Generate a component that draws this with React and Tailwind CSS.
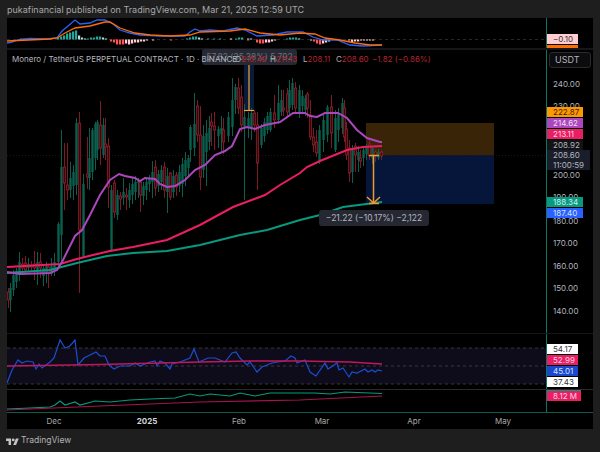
import React from 'react';

const toPoints = (pts) => pts.map((p) => p.join(',')).join(' ');

// candles as [x, high, bodyTop, bodyBottom, low, colour]
const candles = [
  [8, 288, 292, 300, 308, 'r'], [10, 283, 288, 300, 312, 'g'], [13, 270, 275, 290, 296, 'g'], [16, 268, 271, 282, 288, 'g'],
  [19, 252, 262, 275, 281, 'g'], [22, 258, 264, 268, 272, 'r'], [25, 256, 263, 270, 275, 'r'], [28, 258, 264, 268, 274, 'g'],
  [31, 261, 265, 267, 272, 'r'], [34, 251, 264, 268, 280, 'r'], [37, 252, 262, 272, 285, 'g'], [40, 253, 262, 268, 278, 'r'],
  [43, 265, 268, 276, 286, 'g'], [46, 262, 266, 274, 283, 'g'], [48, 266, 267, 272, 288, 'r'], [51, 258, 266, 274, 276, 'g'],
  [54, 253, 262, 270, 276, 'g'], [58, 222, 224, 262, 268, 'g'], [61, 130, 167, 235, 262, 'g'], [64, 143, 167, 183, 210, 'r'],
  [67, 143, 185, 190, 200, 'r'], [70, 162, 178, 190, 198, 'g'], [73, 165, 172, 186, 200, 'g'], [76, 118, 123, 185, 195, 'g'],
  [79, 112, 123, 230, 293, 'r'], [83, 174, 184, 257, 258, 'g'], [87, 137, 174, 177, 189, 'r'], [89, 128, 158, 178, 190, 'g'],
  [92, 128, 130, 172, 180, 'g'], [95, 122, 124, 158, 170, 'g'], [97, 120, 122, 150, 160, 'g'], [100, 101, 125, 148, 165, 'r'],
  [103, 118, 125, 155, 158, 'g'], [105, 118, 144, 147, 160, 'r'], [108, 138, 146, 187, 208, 'r'], [111, 185, 190, 250, 252, 'g'],
  [114, 180, 183, 212, 218, 'r'], [117, 190, 195, 215, 220, 'g'], [120, 192, 196, 199, 210, 'r'], [123, 178, 192, 198, 205, 'g'],
  [126, 188, 195, 197, 210, 'r'], [129, 183, 190, 200, 208, 'g'], [132, 178, 184, 195, 204, 'g'], [135, 176, 182, 192, 200, 'g'],
  [138, 178, 180, 183, 198, 'g'], [140, 180, 182, 195, 212, 'r'], [143, 182, 186, 196, 205, 'g'], [146, 178, 182, 190, 200, 'g'],
  [149, 175, 178, 184, 192, 'g'], [152, 161, 172, 182, 198, 'g'], [155, 160, 167, 188, 196, 'r'], [158, 170, 174, 186, 192, 'g'],
  [161, 165, 170, 182, 190, 'g'], [164, 162, 167, 190, 198, 'r'], [167, 168, 176, 192, 213, 'g'], [170, 172, 173, 197, 200, 'r'],
  [173, 170, 176, 192, 198, 'g'], [176, 172, 175, 187, 196, 'r'], [179, 165, 172, 186, 192, 'g'], [182, 158, 164, 184, 197, 'g'],
  [185, 152, 160, 176, 186, 'g'], [188, 155, 158, 168, 176, 'g'], [190, 125, 127, 150, 162, 'g'], [194, 93, 124, 148, 156, 'g'],
  [197, 100, 106, 135, 142, 'r'], [200, 106, 135, 177, 190, 'r'], [203, 125, 136, 170, 178, 'g'], [206, 120, 133, 152, 186, 'g'],
  [209, 116, 128, 142, 150, 'g'], [211, 113, 122, 126, 146, 'r'], [214, 112, 126, 130, 150, 'r'], [218, 126, 129, 136, 148, 'g'],
  [221, 116, 128, 134, 152, 'g'], [223, 118, 130, 142, 154, 'r'], [228, 112, 117, 136, 142, 'g'], [232, 78, 100, 127, 136, 'g'],
  [235, 84, 87, 100, 114, 'g'], [238, 78, 88, 108, 114, 'r'], [241, 85, 97, 125, 132, 'r'], [244, 104, 117, 127, 200, 'g'],
  [248, 112, 118, 128, 138, 'g'], [251, 108, 113, 128, 140, 'g'], [254, 110, 113, 125, 132, 'r'], [257, 112, 125, 163, 190, 'r'],
  [261, 124, 128, 145, 148, 'g'], [264, 118, 122, 136, 142, 'g'], [267, 112, 116, 130, 134, 'g'], [270, 108, 112, 130, 132, 'g'],
  [274, 95, 113, 120, 128, 'r'], [278, 85, 103, 120, 124, 'g'], [281, 90, 100, 112, 116, 'g'], [283, 90, 108, 110, 116, 'r'],
  [287, 88, 94, 112, 116, 'r'], [289, 80, 90, 108, 114, 'g'], [292, 78, 83, 105, 110, 'g'], [295, 82, 88, 108, 112, 'r'],
  [299, 85, 90, 112, 118, 'g'], [302, 90, 96, 106, 114, 'g'], [305, 95, 98, 110, 116, 'g'], [307, 92, 94, 108, 118, 'r'],
  [310, 100, 115, 137, 140, 'r'], [313, 128, 137, 145, 152, 'r'], [316, 130, 142, 153, 157, 'r'], [319, 125, 130, 162, 164, 'g'],
  [323, 115, 120, 140, 152, 'g'], [327, 105, 107, 135, 142, 'g'], [331, 95, 107, 133, 148, 'r'], [335, 110, 118, 150, 152, 'g'],
  [338, 108, 113, 130, 142, 'g'], [342, 98, 103, 128, 134, 'g'], [344, 100, 108, 137, 142, 'r'], [346, 122, 129, 155, 160, 'r'],
  [349, 140, 148, 173, 182, 'r'], [352, 145, 150, 172, 183, 'g'], [355, 143, 146, 155, 172, 'r'], [358, 146, 152, 160, 172, 'g'],
  [360, 150, 158, 161, 168, 'r'], [363, 148, 150, 158, 166, 'g'], [366, 144, 148, 154, 160, 'g'], [369, 140, 144, 156, 160, 'r'],
  [372, 146, 148, 158, 164, 'g'], [375, 150, 152, 156, 162, 'r'], [378, 149, 152, 158, 160, 'g'], [381, 150, 152, 156, 160, 'r'],
];

const purpleLine = [[7, 272], [20, 274], [50, 273], [57, 270], [62, 262], [75, 236], [82, 230], [90, 215], [100, 195], [110, 180], [119, 174], [125, 176], [135, 178], [140, 181], [145, 178], [155, 179], [160, 184], [167, 187], [175, 186], [185, 180], [195, 170], [205, 165], [215, 155], [225, 151], [232, 146], [240, 129], [247, 127], [255, 129], [265, 125], [280, 122], [293, 113], [305, 113], [310, 116], [317, 117], [325, 113], [338, 113], [347, 118], [357, 130], [367, 138], [380, 142], [382, 142]];
const crimsonLine = [[7, 267], [60, 264], [77, 259], [93, 255], [110, 251], [133, 247], [167, 240], [200, 225], [233, 207], [265, 195], [280, 185], [300, 173], [307, 167], [320, 161], [347, 150], [363, 147], [382, 146]];
const tealLine = [[7, 273], [50, 270], [77, 263], [107, 256], [133, 253], [167, 251], [200, 245], [240, 235], [267, 230], [300, 220], [320, 215], [343, 207], [382, 202]];

const macdBlue = [[7, 43], [12, 42], [18, 40], [30, 38.5], [45, 39], [57, 38], [62, 31], [68, 26], [75, 20], [80, 24], [90, 23], [97, 20], [105, 20], [113, 24], [120, 30], [130, 33], [140, 35], [160, 36], [185, 36], [190, 32], [195, 29], [200, 31], [210, 30], [223, 31], [237, 28], [245, 30], [257, 36], [273, 35], [287, 32], [303, 32], [313, 37], [323, 40], [337, 40], [350, 45], [363, 46], [382, 45]];
const macdOrange = [[7, 41], [50, 39], [57, 38], [65, 33], [75, 28], [90, 26], [105, 22], [110, 22], [120, 28], [135, 33], [150, 35], [170, 36], [190, 35], [200, 32], [230, 31], [245, 29], [260, 33], [280, 35], [300, 33], [315, 34], [325, 38], [340, 40], [355, 43], [370, 45], [382, 45]];

// histogram as [x, height above (+) or below (-) the zero line, colour]
const macdBars = [
  [20, 1, '#26a69a'], [23, 1, '#26a69a'], [26, 1, '#26a69a'], [29, 1, '#b2dfdb'], [32, 1, '#b2dfdb'],
  [57, 2, '#26a69a'], [60, 3, '#26a69a'], [63, 4, '#26a69a'], [66, 6, '#26a69a'], [69, 7, '#26a69a'], [72, 8, '#26a69a'], [75, 9, '#26a69a'], [78, 4, '#b2dfdb'], [81, 2, '#b2dfdb'], [84, 1, '#b2dfdb'],
  [87, 1, '#26a69a'], [90, 2, '#26a69a'], [93, 2, '#26a69a'], [96, 3, '#26a69a'], [99, 3, '#26a69a'], [102, 2, '#b2dfdb'], [105, 1, '#b2dfdb'],
  [110, -2, '#ff5252'], [113, -3, '#ff5252'], [116, -5, '#ff5252'], [119, -5, '#ff5252'], [122, -5, '#ff5252'], [125, -4, '#ffcdd2'], [128, -5, '#ffcdd2'], [131, -4, '#ffcdd2'], [134, -3, '#ffcdd2'], [137, -3, '#ffcdd2'], [140, -2, '#ffcdd2'], [143, -2, '#ffcdd2'], [146, -1, '#ffcdd2'], [152, -1, '#ffcdd2'], [170, -1, '#ff5252'],
  [186, 1, '#26a69a'], [189, 2, '#26a69a'], [192, 3, '#26a69a'], [195, 3, '#26a69a'], [198, 2, '#b2dfdb'], [201, 1, '#b2dfdb'], [207, 1, '#26a69a'], [213, 1, '#26a69a'], [219, 1, '#26a69a'], [230, 1, '#ffcdd2'],
  [235, 1, '#26a69a'], [238, 2, '#26a69a'], [241, 2, '#26a69a'], [247, 1, '#b2dfdb'], [250, 1, '#b2dfdb'],
  [247, -1, '#ff5252'], [256, -3, '#ff5252'], [259, -4, '#ff5252'], [262, -4, '#ff5252'], [265, -3, '#ffcdd2'], [268, -3, '#ffcdd2'], [271, -2, '#ffcdd2'], [274, -1, '#ffcdd2'],
  [286, 1, '#26a69a'], [289, 2, '#26a69a'], [292, 2, '#26a69a'], [295, 2, '#26a69a'], [298, 1, '#b2dfdb'],
  [310, -1, '#ffcdd2'], [313, -2, '#ff5252'], [316, -4, '#ff5252'], [319, -5, '#ff5252'], [322, -4, '#ffcdd2'], [325, -3, '#ffcdd2'], [328, -2, '#ffcdd2'],
  [348, -1, '#ffcdd2'], [351, -3, '#ffcdd2'], [354, -2, '#ffcdd2'], [357, -2, '#ffcdd2'], [360, -1, '#ffcdd2'], [363, -1, '#ffcdd2'], [366, -1, '#ffcdd2'], [369, -1, '#ffcdd2'], [372, -1, '#ffcdd2'],
];

const rsiLine = [[7, 383], [12, 370], [18, 360], [22, 363], [27, 361], [33, 362], [36, 369], [39, 364], [42, 368], [50, 362], [54, 358], [60, 340], [65, 348], [70, 346], [75, 340], [78, 365], [84, 358], [90, 355], [96, 352], [100, 356], [105, 356], [109, 365], [114, 369], [120, 366], [130, 366], [135, 363], [140, 366], [150, 362], [155, 361], [157, 366], [160, 361], [165, 363], [170, 369], [172, 364], [180, 362], [190, 358], [194, 349], [199, 362], [208, 358], [215, 358], [225, 362], [232, 353], [236, 352], [240, 358], [247, 365], [250, 362], [257, 372], [262, 367], [272, 363], [278, 362], [285, 361], [291, 356], [295, 358], [297, 363], [305, 360], [310, 372], [316, 376], [325, 363], [328, 369], [337, 363], [339, 370], [343, 368], [349, 377], [352, 372], [357, 373], [365, 369], [368, 372], [372, 370], [375, 372], [378, 370], [382, 371]];
const rsiMa = [[7, 366], [100, 364.5], [200, 362], [250, 361], [300, 361], [350, 362], [382, 364]];
const volGreen = [[7, 409], [30, 408], [50, 407], [55, 405], [60, 401], [65, 405], [75, 402], [80, 405], [95, 401], [110, 402], [130, 400], [150, 399], [175, 398], [190, 394], [200, 396], [210, 394], [230, 396], [240, 393], [255, 396], [270, 393], [290, 393], [315, 393], [330, 394], [345, 392], [382, 393.5]];
const volMa = [[7, 410], [100, 406], [200, 402], [300, 400], [382, 396]];

const mainLabels = [
  { text: '240.00', top: 79, cls: 'text-[#b2b5be]' },
  { text: '230.00', top: 101, cls: 'text-[#b2b5be]' },
  { text: '190.00', top: 192, cls: 'text-[#b2b5be]' },
  { text: '180.00', top: 216, cls: 'text-[#b2b5be]' },
  { text: '170.00', top: 238, cls: 'text-[#b2b5be]' },
  { text: '160.00', top: 261, cls: 'text-[#b2b5be]' },
  { text: '150.00', top: 283, cls: 'text-[#b2b5be]' },
  { text: '140.00', top: 306, cls: 'text-[#b2b5be]' },
  { text: '200.00', top: 170, cls: 'text-[#b2b5be]' },
  { text: '222.87', top: 107, cls: 'bg-[#ff9800] text-[#3a2408] w-[36px]' },
  { text: '214.62', top: 118, cls: 'bg-[#ab47bc] text-[#f1dcf5] w-[36px]' },
  { text: '213.11', top: 129, cls: 'bg-[#e91e63] text-[#fbd5e2] w-[36px]' },
  { text: '208.92', top: 140, cls: 'bg-[#131316] text-[#b2b5be] w-[36px]' },
  { text: '188.34', top: 197, cls: 'bg-[#089981] text-[#cdeee8] w-[36px]' },
  { text: '187.40', top: 208, cls: 'bg-[#2962ff] text-[#d5e0ff] w-[36px]' },
];

const rsiLabels = [
  { text: '54.17', top: 344, cls: 'bg-white text-[#333] w-[31px]' },
  { text: '52.99', top: 355, cls: 'bg-[#e91e63] text-[#fbd5e2] w-[31px]' },
  { text: '45.01', top: 366, cls: 'bg-[#1848cc] text-[#d5e0ff] w-[31px]' },
  { text: '37.43', top: 377, cls: 'bg-white text-[#333] w-[31px]' },
];

const timeLabels = [
  { text: 'Dec', x: 54 },
  { text: '2025', x: 147, bold: true },
  { text: 'Feb', x: 239 },
  { text: 'Mar', x: 322 },
  { text: 'Apr', x: 414 },
  { text: 'May', x: 503 },
];

const PriceLabel = ({ text, top, cls, offset }) => (
  <div
    className={`absolute left-0 h-[10px] pl-[6px] text-[8px] leading-[10px] whitespace-nowrap ${cls}`}
    style={{ top: top - offset }}
  >
    {text}
  </div>
);

const Candles = () => (
  <g>
    {candles.map(([x, high, top, bottom, low, colour], i) => {
      const isRed = colour === 'r';
      return (
        <g key={i}>
          <rect x={x} y={high} width="1" height={low - high} fill={isRed ? '#7d1a25' : '#0a5f4f'} />
          <rect
            x={x - 0.7}
            y={top}
            width="2.4"
            height={bottom - top}
            fill={isRed ? '#2e0c10' : '#0a5f4f'}
            stroke={isRed ? '#a3212c' : 'none'}
            strokeWidth="0.7"
          />
        </g>
      );
    })}
  </g>
);

const MainChart = () => (
  <svg className="block w-[539px] h-[283px]" viewBox="7 50 539 283">
    <rect x="366" y="123" width="128" height="32" fill="#3a2408" />
    <rect x="366" y="155" width="128" height="49" fill="#06163a" />
    <rect x="244" y="65" width="10" height="45" fill="#0a1a3a" />
    <line x1="7" y1="155.5" x2="546" y2="155.5" stroke="#3a1519" strokeWidth="0.7" strokeDasharray="1 2" />
    <Candles />
    <polyline points={toPoints(tealLine)} fill="none" stroke="#089981" strokeWidth="2" />
    <polyline points={toPoints(crimsonLine)} fill="none" stroke="#e91e63" strokeWidth="2" />
    <polyline points={toPoints(purpleLine)} fill="none" stroke="#ab47bc" strokeWidth="2" />
    {/* measure tool, upper one */}
    <line x1="249" y1="65" x2="249" y2="110" stroke="#f0a63a" strokeWidth="1.2" />
    <line x1="244" y1="110.5" x2="254" y2="110.5" stroke="#f0a63a" strokeWidth="1.2" />
    {/* measure tool, lower one */}
    <line x1="369" y1="155.5" x2="379" y2="155.5" stroke="#f09a30" strokeWidth="1.5" />
    <line x1="373.5" y1="156" x2="373.5" y2="203" stroke="#f09a30" strokeWidth="1.5" />
    <polyline points="367,197 373.5,203 380,197" fill="none" stroke="#f09a30" strokeWidth="1.5" />
    <line x1="369" y1="203.5" x2="379" y2="203.5" stroke="#f09a30" strokeWidth="1.5" />
  </svg>
);

const MacdChart = () => (
  <svg className="block w-[539px] h-[30px]" viewBox="7 18 539 30">
    <line x1="7" y1="39.5" x2="546" y2="39.5" stroke="#3a3a3e" strokeWidth="0.7" strokeDasharray="3 3" />
    {macdBars.map(([x, h, colour], i) => (
      <rect key={i} x={x} y={h > 0 ? 39.5 - h : 39.5} width="2.2" height={Math.abs(h)} fill={colour} />
    ))}
    <polyline points={toPoints(macdBlue)} fill="none" stroke="#2962ff" strokeWidth="1.3" />
    <polyline points={toPoints(macdOrange)} fill="none" stroke="#ff6d00" strokeWidth="1.3" />
  </svg>
);

const RsiChart = () => (
  <svg className="block w-[539px] h-[55px]" viewBox="7 334 539 55">
    <rect x="7" y="348" width="539" height="36" fill="#0e0b1a" />
    <line x1="7" y1="348" x2="546" y2="348" stroke="#4a4a4e" strokeWidth="0.7" strokeDasharray="3 3" />
    <line x1="7" y1="366" x2="546" y2="366" stroke="#4a4a4e" strokeWidth="0.7" strokeDasharray="3 3" />
    <line x1="7" y1="384" x2="546" y2="384" stroke="#4a4a4e" strokeWidth="0.7" strokeDasharray="3 3" />
    <polyline points={toPoints(rsiLine)} fill="none" stroke="#1a4fd0" strokeWidth="1.2" />
    <polyline points={toPoints(rsiMa)} fill="none" stroke="#c2185b" strokeWidth="1.4" />
  </svg>
);

const VolumeChart = () => (
  <svg className="block w-[539px] h-[22px]" viewBox="7 390 539 22">
    <polyline points={toPoints(volGreen)} fill="none" stroke="#089981" strokeWidth="1.2" />
    <polyline points={toPoints(volMa)} fill="none" stroke="#a3154f" strokeWidth="1.2" />
  </svg>
);

const TvLogo = () => (
  <svg className="w-[13px] h-[10px]" viewBox="0 0 36 28" fill="#c4c4c4">
    <path d="M14 25H7V14H0V7h14v18zM28 25h-8l7.5-18h8L28 25z" />
    <circle cx="20" cy="11" r="4" />
  </svg>
);

const App = () => {
  return (
    <div className="w-[600px] h-[452px] bg-[#1e1e1e] flex flex-col font-['Inter',sans-serif] overflow-hidden">
      <div className="h-[18px] pl-[7px] text-[9px] leading-[20px] text-[#a8a8a8] whitespace-nowrap">
        pukafinancial published on TradingView.com, Mar 21, 2025 12:59 UTC
      </div>

      <div className="mx-[7px] h-[411px] bg-black flex flex-col">
        {/* MACD pane */}
        <div className="flex h-[30px]">
          <MacdChart />
          <div className="relative flex-1 border-l border-[#0f7563]">
            <PriceLabel text="−0.10" top={34} offset={18} cls="bg-[#ffcdd2] text-[#333] w-[31px]" />
            <div className="absolute left-0 top-[27px] w-[31px] h-[3px] bg-[#ff6d00]" />
          </div>
        </div>
        <div className="h-[2px] bg-[#15151a]" />

        {/* price pane */}
        <div className="flex h-[283px] relative">
          <MainChart />
          <div className="absolute left-[195px] top-[-1px] w-[95px] h-[16px] rounded-[3px] bg-[#2a2e39]/90 text-center text-[8.5px] leading-[16px] text-[#6c7078] whitespace-nowrap">
            57.82 (35.38%) 5,792
          </div>
          <div className="absolute left-[5px] top-[4px] text-[8px] leading-[11px] text-[#b2b5be] whitespace-nowrap">
            Monero / TetherUS PERPETUAL CONTRACT · 1D · BINANCE
          </div>
          <div className="absolute left-[228px] top-[4px] flex text-[8px] leading-[11px] whitespace-nowrap text-[#b2b5be]">
            <span className="w-[35px]">O<span className="text-[#b3242f]">210.42</span></span>
            <span className="w-[33px]">H<span className="text-[#b3242f]">211.13</span></span>
            <span className="w-[33px]">L<span className="text-[#b3242f]">208.11</span></span>
            <span className="w-[36px]">C<span className="text-[#b3242f]">208.60</span></span>
            <span className="text-[#b3242f]">−1.82 (−0.86%)</span>
          </div>
          <div className="absolute left-[312px] top-[160px] w-[110px] h-[16px] rounded-[3px] bg-[#252833] text-center text-[8.5px] leading-[16px] text-[#b2b5be] whitespace-nowrap">
            −21.22 (−10.17%) −2,122
          </div>
          <div className="relative flex-1 border-l border-[#0f7563]">
            <div className="absolute left-[2px] top-[2px] w-[42px] h-[16px] rounded-[3px] border border-[#2a2a2e] bg-[#0c0c0e] pl-[5px] text-[9px] leading-[14px] text-[#b2b5be]">
              USDT
            </div>
            {mainLabels.map((l) => (
              <PriceLabel key={l.text} text={l.text} top={l.top} offset={50} cls={l.cls} />
            ))}
            <div className="absolute left-0 top-[100px] w-[43px] h-[20px] pl-[6px] bg-[#1a1e2a] text-[8px] leading-[10px] text-[#b2b5be]">
              <div>208.60</div>
              <div>11:00:59</div>
            </div>
          </div>
        </div>

        {/* RSI pane */}
        <div className="h-[1px] bg-[#15151a]" />
        <div className="flex h-[55px]">
          <RsiChart />
          <div className="relative flex-1 border-l border-[#0f7563]">
            {rsiLabels.map((l) => (
              <PriceLabel key={l.text} text={l.text} top={l.top} offset={334} cls={l.cls} />
            ))}
          </div>
        </div>
        <div className="h-[1px] bg-[#2a2a2e]" />

        {/* volume pane */}
        <div className="flex h-[22px]">
          <VolumeChart />
          <div className="relative flex-1 border-l border-[#0f7563]">
            <div className="absolute left-0 top-0 w-[34px] h-[1px] bg-[#089981]" />
            <PriceLabel text="8.12 M" top={391} offset={390} cls="bg-[#e91e63] text-[#fbd5e2] w-[34px]" />
          </div>
        </div>

        {/* time axis */}
        <div className="relative h-[17px] border-t border-[#0f5a4c]">
          {timeLabels.map((t) => (
            <span
              key={t.text}
              className={`absolute top-[3px] -translate-x-1/2 text-[8px] leading-[10px] ${t.bold ? 'font-bold text-[#d1d4dc]' : 'text-[#a8a8a8]'}`}
              style={{ left: t.x - 7 }}
            >
              {t.text}
            </span>
          ))}
        </div>
      </div>

      <div className="flex items-center gap-[2px] pl-[6px] h-[23px] text-[8.5px] text-[#b4b4b4]">
        <TvLogo />
        <span>TradingView</span>
      </div>
    </div>
  );
};

export default App;
